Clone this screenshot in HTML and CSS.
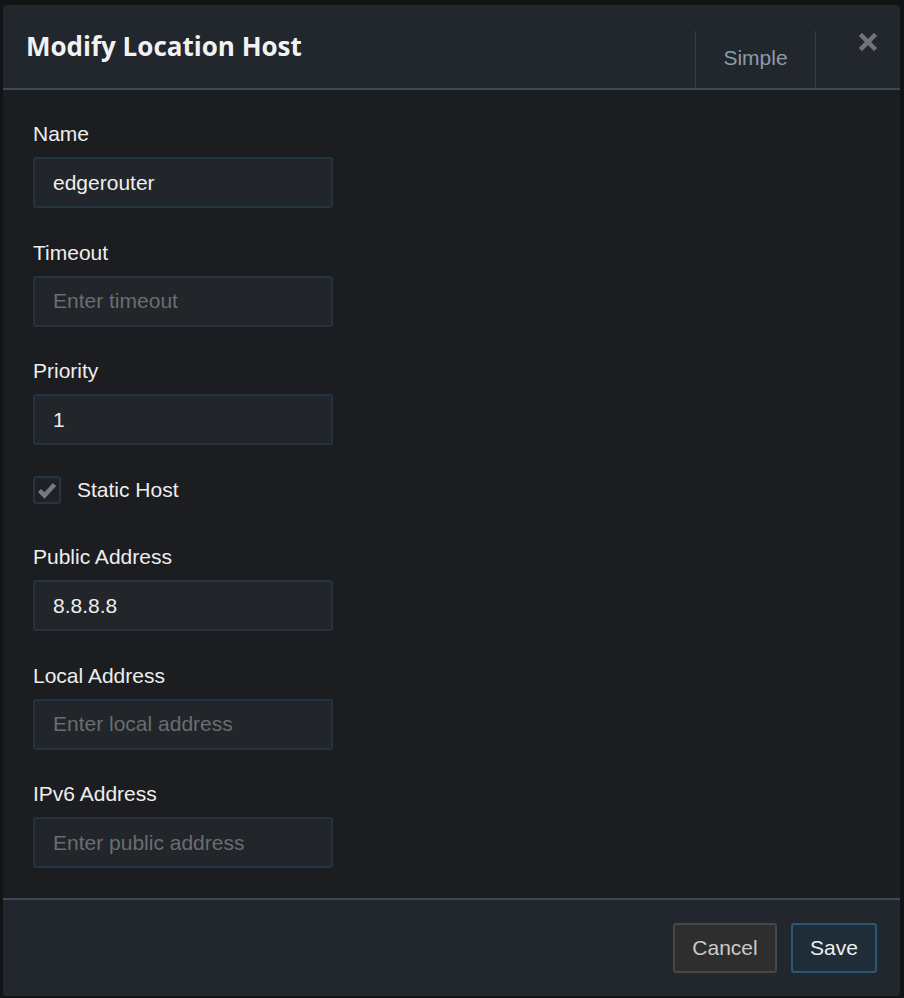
FILE: index.html
```html
<!DOCTYPE html>
<html lang="en">
<head>
  <meta charset="UTF-8">
  <meta name="viewport" content="width=device-width, initial-scale=1.0">
  <title>Modify Location Host</title>
  <link rel="stylesheet" href="styles.css">
</head>
<body>
  <div class="modal">
    <div class="modal-header">
      <h1>Modify Location Host</h1>
      <div class="header-tabs">
        <div class="tab">Simple</div>
        <button class="close" aria-label="Close">
          <svg width="18" height="18" viewBox="0 0 18 18">
            <path d="M3 3 L15 15 M15 3 L3 15" stroke="#707479" stroke-width="4.5" stroke-linecap="square"/>
          </svg>
        </button>
      </div>
    </div>

    <div class="modal-body">
      <div class="field">
        <label>Name</label>
        <input type="text" value="edgerouter">
      </div>
      <div class="field">
        <label>Timeout</label>
        <input type="text" placeholder="Enter timeout">
      </div>
      <div class="field">
        <label>Priority</label>
        <input type="text" value="1">
      </div>
      <div class="check-row">
        <span class="checkbox">
          <svg width="22" height="22" viewBox="0 0 22 22">
            <path d="M3.5 11.5 L8.5 16.5 L18.5 5.5" fill="none" stroke="#76797d" stroke-width="4.5"/>
          </svg>
        </span>
        <span class="check-label">Static Host</span>
      </div>
      <div class="field">
        <label>Public Address</label>
        <input type="text" value="8.8.8.8">
      </div>
      <div class="field">
        <label>Local Address</label>
        <input type="text" placeholder="Enter local address">
      </div>
      <div class="field last">
        <label>IPv6 Address</label>
        <input type="text" placeholder="Enter public address">
      </div>
    </div>

    <div class="modal-footer">
      <button class="btn btn-cancel">Cancel</button>
      <button class="btn btn-save">Save</button>
    </div>
  </div>
</body>
</html>
```

FILE: styles.css
```css
body {
  margin: 0;
  padding: 5px 4px 2px 3px;
  background-color: #111315;
  font-family: "Liberation Sans", Arial, sans-serif;
  color: #e6e6e6;
}

.modal {
  width: 897px;
  background-color: #1c1d20;
  border-radius: 4px;
  overflow: hidden;
}

.modal-header {
  height: 83px;
  display: flex;
  justify-content: space-between;
  background-color: #22262d;
  border-bottom: 2px solid #3a4a58;
}

.modal-header h1 {
  margin: 0;
  padding: 23px 0 0 23px;
  font-family: "Open Sans", sans-serif;
  font-size: 26px;
  font-weight: 700;
  line-height: 36px;
  color: #f2f2f2;
}

.header-tabs {
  display: flex;
  align-items: flex-start;
}

.tab {
  width: 119px;
  height: 57px;
  margin-top: 26px;
  border-left: 1px solid #343f49;
  border-right: 1px solid #343f49;
  text-align: center;
  font-size: 21px;
  line-height: 54px;
  color: #8b9cac;
}

.close {
  width: 84px;
  height: 36px;
  margin-top: 19px;
  padding: 0 0 0 20px;
  border: none;
  background: none;
  display: flex;
  justify-content: center;
  align-items: center;
  cursor: pointer;
}

.modal-body {
  padding: 32px 30px 30px;
}

.field {
  margin-bottom: 32.5px;
}

.field.last {
  margin-bottom: 0;
}

.field label {
  display: block;
  font-size: 21px;
  line-height: 24px;
  margin-bottom: 11px;
  color: #eeeeee;
}

.field input {
  box-sizing: border-box;
  width: 300px;
  height: 51px;
  padding: 0 18px;
  background-color: #22252a;
  border: 2px solid #233441;
  border-radius: 3px;
  font-family: "Liberation Sans", Arial, sans-serif;
  font-size: 21px;
  color: #eeeeee;
  outline: none;
}

.field input::placeholder {
  color: #6a6d71;
}

.check-row {
  display: flex;
  align-items: center;
  margin-top: -1.5px;
  margin-bottom: 41px;
  height: 28px;
}

.checkbox {
  box-sizing: border-box;
  width: 28px;
  height: 28px;
  border: 2px solid #253643;
  border-radius: 3px;
  display: flex;
  justify-content: center;
  align-items: center;
  background-color: #1e2125;
}

.check-label {
  margin-left: 16px;
  font-size: 21px;
  color: #eeeeee;
}

.modal-footer {
  height: 96px;
  display: flex;
  justify-content: flex-end;
  align-items: center;
  gap: 14px;
  padding-right: 23px;
  background-color: #22262d;
  border-top: 2px solid #3a4a58;
}

.btn {
  height: 50px;
  padding: 0;
  border-radius: 3px;
  font-family: "Liberation Sans", Arial, sans-serif;
  font-size: 21px;
  cursor: pointer;
}

.btn-cancel {
  width: 104px;
  background-color: #2e2e2e;
  border: 2px solid #474747;
  color: #c9c9c9;
}

.btn-save {
  width: 86px;
  background-color: #1f2d38;
  border: 2px solid #2c5672;
  color: #eeeeee;
}
```
